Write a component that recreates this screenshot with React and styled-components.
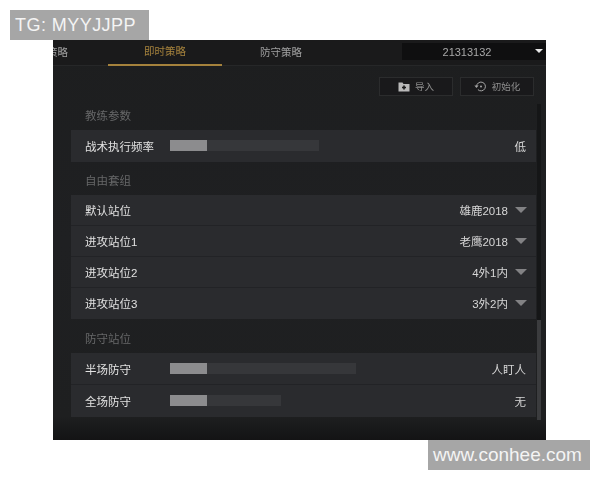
import React from 'react';
import styled, { createGlobalStyle } from 'styled-components';

const GlobalStyle = createGlobalStyle`
  html, body {
    margin: 0;
    padding: 0;
    background: #fff;
  }
  * {
    box-sizing: border-box;
  }
`;

const Page = styled.div`
  width: 600px;
  height: 480px;
  padding-top: 10px;
  overflow: hidden;
  display: flex;
  flex-direction: column;
  font-family: "Liberation Sans", "Noto Sans CJK SC", sans-serif;
`;

const Watermark = styled.div`
  width: ${props => props.$width}px;
  height: 30px;
  margin-left: ${props => props.$left}px;
  padding-left: 5px;
  display: flex;
  align-items: center;
  background: #a6a6a6;
  color: #f4f4f4;
  font-size: ${props => props.$size}px;
  letter-spacing: ${props => props.$spacing}px;
  white-space: nowrap;
`;

const Panel = styled.div`
  position: relative;
  width: 493px;
  height: 400px;
  margin-left: 53px;
  overflow: hidden;
  background: linear-gradient(180deg, #1d1e1f 0%, #1f2022 50%, #1e1f20 94%, #131314 100%);
  filter: blur(0.45px);
`;

const TabBar = styled.div`
  height: 26px;
  display: flex;
  gap: 2px;
  margin-left: -65px;
  background: #1a1a1b;
  border-bottom: 1px solid #262728;
`;

const Tab = styled.div`
  width: ${props => props.$width}px;
  height: 26px;
  flex: none;
  display: flex;
  align-items: center;
  justify-content: center;
  padding-bottom: 3px;
  font-size: 10.5px;
  color: ${props => (props.$active ? '#a5823c' : '#a0a0a0')};
  border-bottom: ${props => (props.$active ? '2px solid #a5823c' : 'none')};
`;

const Select = styled.div`
  position: relative;
  width: 144px;
  height: 17px;
  margin: 3px 0 0 auto;
  flex: none;
  display: flex;
  align-items: center;
  justify-content: center;
  padding-right: 14px;
  background: #0f0f10;
  color: #a8a8a8;
  font-size: 11px;
`;

const SelectCaret = styled.span`
  position: absolute;
  right: 3px;
  top: 6px;
  border-left: 4px solid transparent;
  border-right: 4px solid transparent;
  border-top: 4px solid #e8e8e8;
`;

const Toolbar = styled.div`
  height: 19px;
  margin: 11px 12px 1px 0;
  display: flex;
  justify-content: flex-end;
  gap: 7px;
`;

const ToolButton = styled.div`
  width: 74px;
  height: 19px;
  padding-bottom: 1px;
  display: flex;
  align-items: center;
  justify-content: center;
  gap: 5px;
  background: #19191b;
  border: 1px solid #2b2c2d;
  color: #8f8f8f;
  font-size: 9.5px;
`;

const GroupLabel = styled.div`
  height: ${props => props.$height}px;
  padding: 3px 0 0 32px;
  display: flex;
  align-items: center;
  color: #666768;
  font-size: 11.5px;
`;

const RowList = styled.div`
  margin: 0 10px 0 18px;
  background: #2a2b2e;
`;

const Row = styled.div`
  height: ${props => props.$height}px;
  padding: 0 9px 0 14px;
  display: flex;
  align-items: center;
  color: #e2e2e2;
  font-size: 11.5px;
  border-bottom: 1px solid ${props => (props.$last ? 'transparent' : '#222326')};
`;

const RowLabel = styled.span`
  width: 85px;
  flex: none;
`;

const Track = styled.div`
  width: ${props => props.$width}px;
  height: 11px;
  background: #36373a;
`;

const Thumb = styled.div`
  width: 37px;
  height: 100%;
  background: #8c8c8e;
`;

const Value = styled.span`
  margin-left: auto;
  padding-right: 1px;
  color: #d6d6d6;
`;

const Caret = styled.span`
  margin-left: 6px;
  border-left: 6px solid transparent;
  border-right: 6px solid transparent;
  border-top: 6px solid #828284;
`;

const ScrollTrack = styled.div`
  position: absolute;
  left: 484px;
  top: 64px;
  width: 4px;
  height: 316px;
  display: flex;
  align-items: flex-end;
  background: #151617;
`;

const ScrollThumb = styled.div`
  width: 100%;
  height: 100px;
  background: #3b3c3e;
`;

const FolderIcon = () => (
  <svg width="12" height="11" viewBox="0 0 12 11">
    <path d="M0.5 1.5h4l1 1.5h6v7.5h-11z" fill="#b9b9b9" />
    <path d="M6 4.5v4M4 6.5h4" stroke="#1a1a1b" strokeWidth="1.6" />
  </svg>
);

const ResetIcon = () => (
  <svg width="13" height="13" viewBox="0 0 13 13" fill="none">
    <path d="M2.6 6.5a4.4 4.4 0 1 1 1.3 3.1" stroke="#a5a5a5" strokeWidth="1" />
    <path d="M0.4 5.4h4.2l-2.1 2.5z" fill="#a5a5a5" />
    <circle cx="7" cy="6.5" r="1" fill="#a5a5a5" />
  </svg>
);

const SliderRow = ({ label, track, value, last }) => (
  <Row $height={32} $last={last}>
    <RowLabel>{label}</RowLabel>
    <Track $width={track}>
      <Thumb />
    </Track>
    <Value>{value}</Value>
  </Row>
);

const SelectRow = ({ label, value, last }) => (
  <Row $height={31} $last={last}>
    <RowLabel>{label}</RowLabel>
    <Value>{value}</Value>
    <Caret />
  </Row>
);

const App = () => (
  <>
    <GlobalStyle />
    <Page>
      <Watermark $left={10} $width={139} $size={18} $spacing={0.45}>TG: MYYJJPP</Watermark>
      <Panel>
        <TabBar>
          <Tab $width={118}>进攻策略</Tab>
          <Tab $width={114} $active>即时策略</Tab>
          <Tab $width={114}>防守策略</Tab>
          <Select>
            21313132
            <SelectCaret />
          </Select>
        </TabBar>
        <Toolbar>
          <ToolButton><FolderIcon />导入</ToolButton>
          <ToolButton><ResetIcon />初始化</ToolButton>
        </Toolbar>
        <GroupLabel $height={33}>教练参数</GroupLabel>
        <RowList>
          <SliderRow label="战术执行频率" track={149} value="低" last />
        </RowList>
        <GroupLabel $height={33}>自由套组</GroupLabel>
        <RowList>
          <SelectRow label="默认站位" value="雄鹿2018" />
          <SelectRow label="进攻站位1" value="老鹰2018" />
          <SelectRow label="进攻站位2" value="4外1内" />
          <SelectRow label="进攻站位3" value="3外2内" last />
        </RowList>
        <GroupLabel $height={34}>防守站位</GroupLabel>
        <RowList>
          <SliderRow label="半场防守" track={186} value="人盯人" />
          <SliderRow label="全场防守" track={111} value="无" last />
        </RowList>
        <ScrollTrack>
          <ScrollThumb />
        </ScrollTrack>
      </Panel>
      <Watermark $left={428} $width={162} $size={19} $spacing={0}>www.conhee.com</Watermark>
    </Page>
  </>
);

export default App;
